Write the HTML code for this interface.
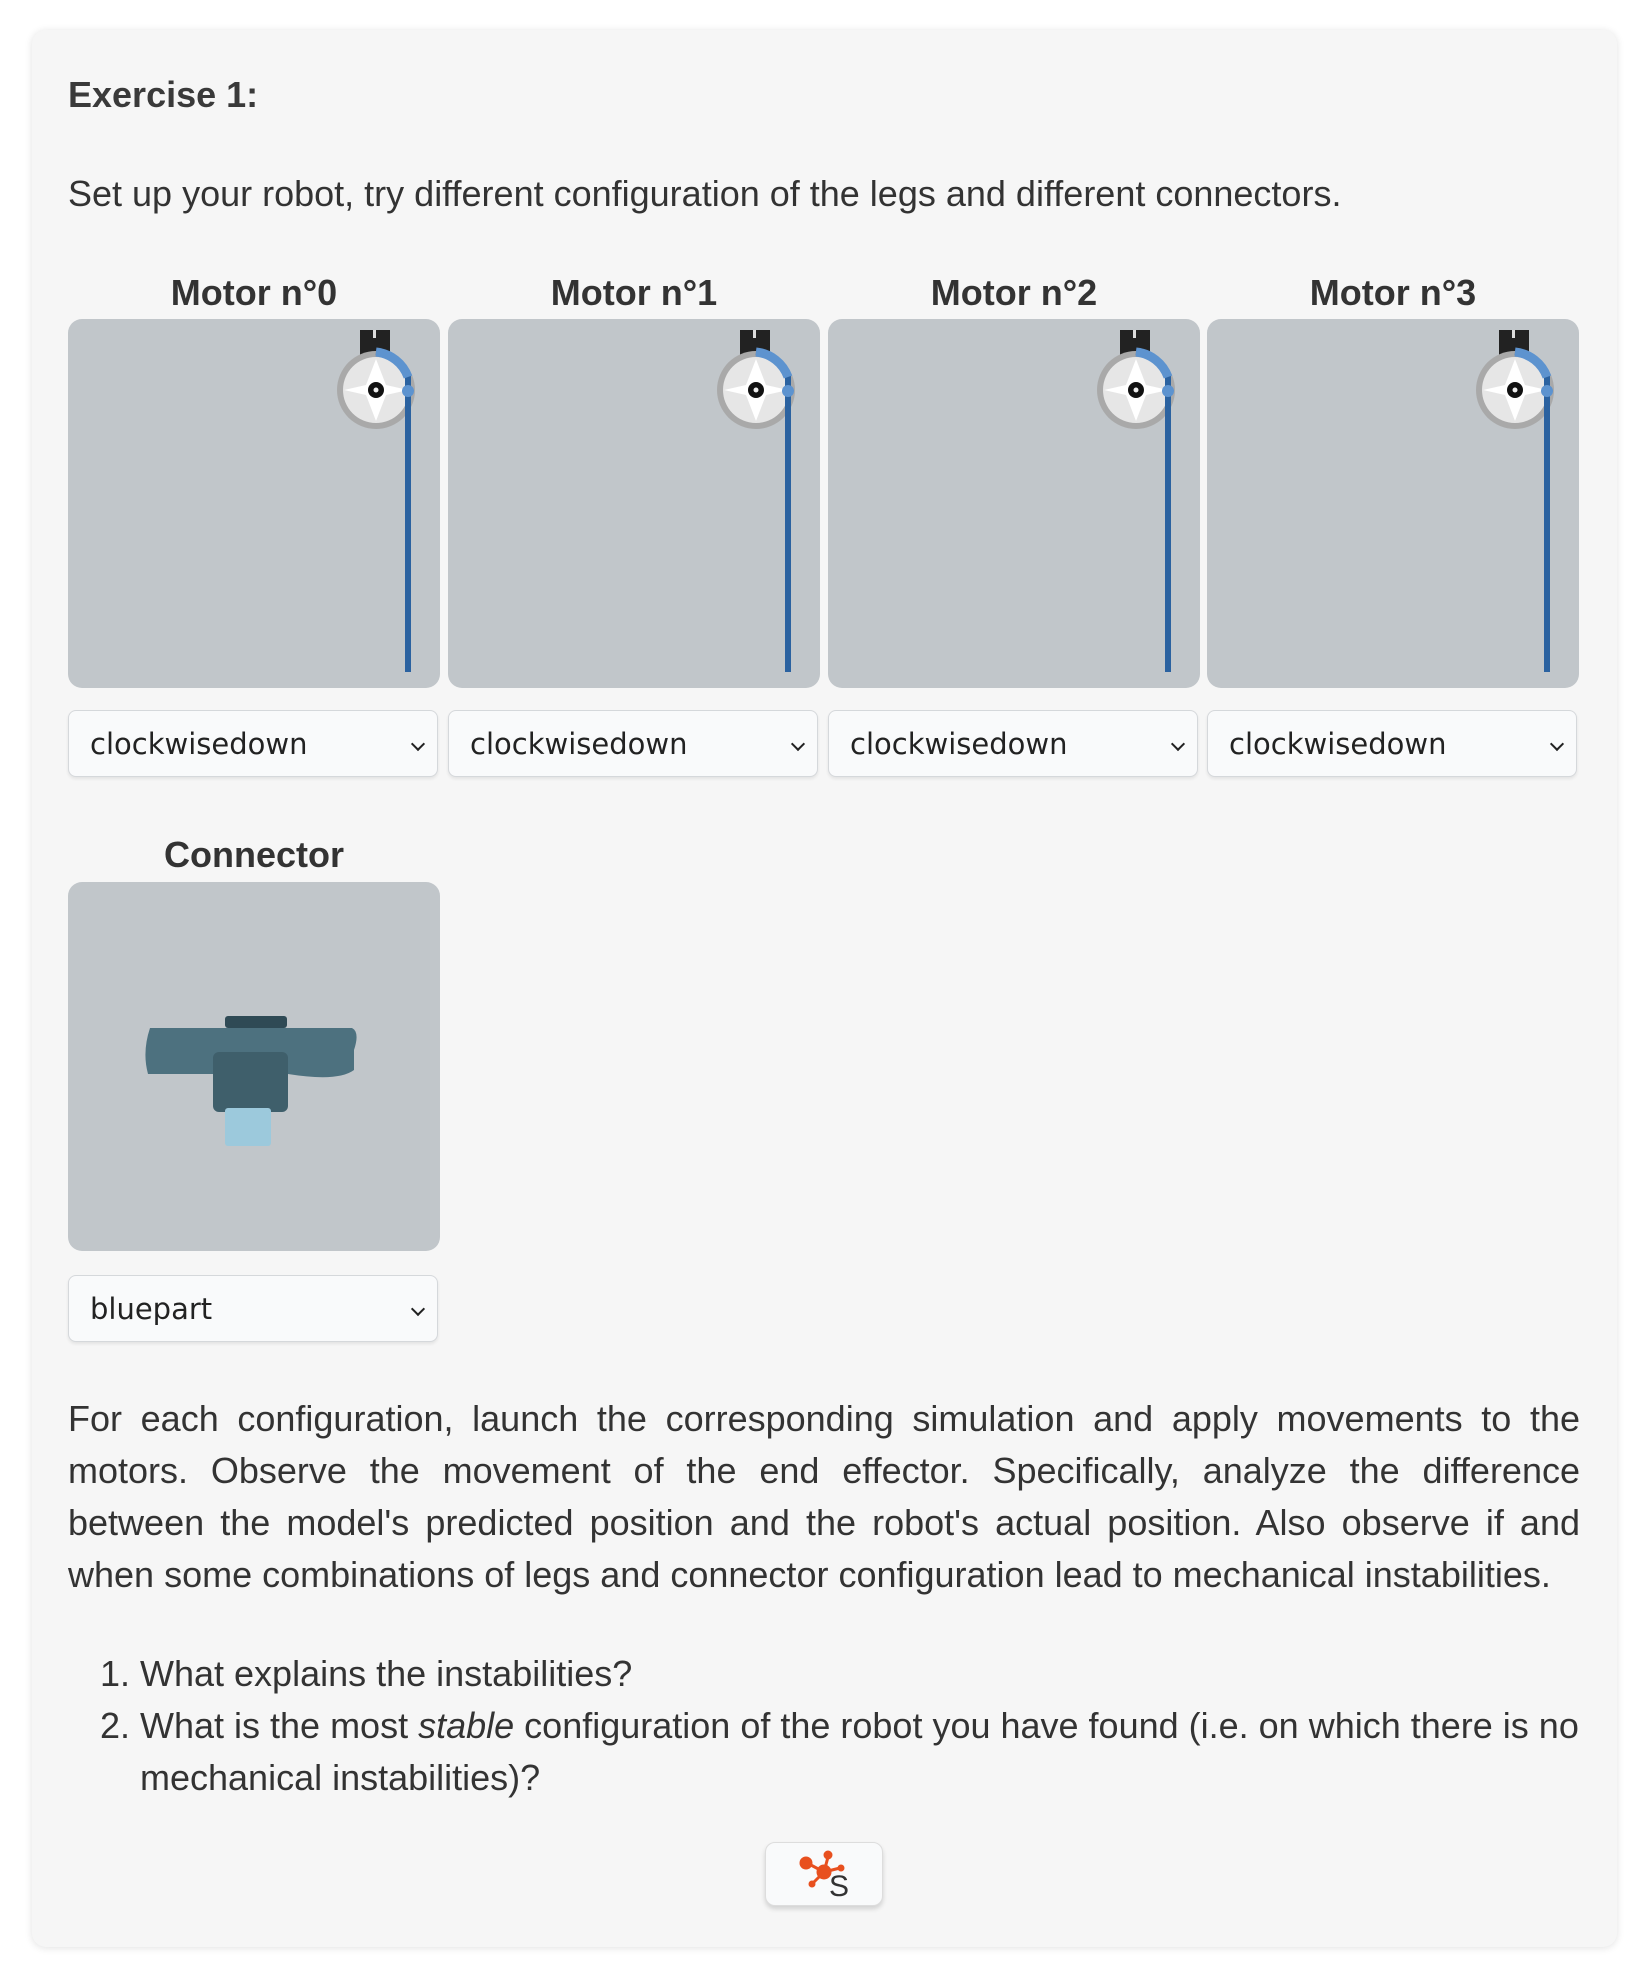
<!DOCTYPE html>
<html><head><meta charset="utf-8"><style>
body{margin:0;background:#fff;width:1647px;height:1987px;font-family:"Liberation Sans",sans-serif;color:#333;}
.card{position:absolute;left:32px;top:30px;width:1585px;height:1917px;background:#f6f6f6;border-radius:14px;box-shadow:0 1px 8px rgba(0,0,0,.12);}
.abs{position:absolute;}
h3{position:absolute;left:68px;top:74px;margin:0;font-size:36px;font-weight:bold;color:#3a3a3a;}
.t{position:absolute;font-size:36px;font-weight:bold;text-align:center;width:372px;color:#333;}
.p{position:absolute;left:68px;width:1512px;font-size:36px;line-height:52px;color:#333;}
.panel{position:absolute;width:372px;height:369px;background:#c1c6ca;border-radius:14px;overflow:hidden;}
.sel{position:absolute;width:370px;height:67px;background:#f9fafb;border:1px solid #d5d8db;border-radius:8px;box-shadow:0 2px 3px rgba(0,0,0,.08);line-height:67px;color:#222;box-sizing:border-box;padding-left:21px;font-family:"DejaVu Sans","Liberation Sans",sans-serif;font-size:29px;}
.sel:after{content:"";position:absolute;right:14px;top:28px;width:8px;height:8px;border-right:2px solid #222;border-bottom:2px solid #222;transform:rotate(45deg);}
</style></head><body>
<div class="card"></div>
<h3>Exercise 1:</h3>
<div class="p" style="top:168px">Set up your robot, try different configuration of the legs and different connectors.</div>

<div class="t" style="left:68px;top:272px">Motor n°0</div>
<div class="t" style="left:448px;top:272px">Motor n°1</div>
<div class="t" style="left:828px;top:272px">Motor n°2</div>
<div class="t" style="left:1207px;top:272px">Motor n°3</div>

<svg width="0" height="0" style="position:absolute"><defs>
<g id="m">
<rect x="292" y="11" width="30" height="28" fill="#222"/>
<rect x="305" y="11" width="3" height="8" fill="#ddd"/>
<circle cx="308" cy="71" r="39" fill="#a9a9a9"/>
<circle cx="308" cy="71" r="33" fill="#e6e6e6"/>
<path d="M308 40 L318 66 L340 71 L318 76 L308 102 L298 76 L276 71 L298 66Z" fill="#fff"/>
<path d="M308 33 A38 38 0 0 1 340 58 L340 353" stroke="#2b62a0" stroke-width="6" fill="none"/>
<path d="M308 33 A38 38 0 0 1 340 58" stroke="#5d93cf" stroke-width="9" fill="none"/>
<circle cx="340" cy="72" r="6" fill="#5d93cf"/>
<circle cx="308" cy="71" r="8" fill="#111"/><circle cx="308" cy="71" r="2.5" fill="#eee"/>
</g></defs></svg>
<div class="panel" style="left:68px;top:319px"><svg width="372" height="369"><use href="#m"/></svg></div>
<div class="panel" style="left:448px;top:319px"><svg width="372" height="369"><use href="#m"/></svg></div>
<div class="panel" style="left:828px;top:319px"><svg width="372" height="369"><use href="#m"/></svg></div>
<div class="panel" style="left:1207px;top:319px"><svg width="372" height="369"><use href="#m"/></svg></div>

<div class="sel" style="left:68px;top:710px">clockwisedown</div>
<div class="sel" style="left:448px;top:710px">clockwisedown</div>
<div class="sel" style="left:828px;top:710px">clockwisedown</div>
<div class="sel" style="left:1207px;top:710px">clockwisedown</div>

<div class="t" style="left:68px;top:834px">Connector</div>
<div class="panel" style="left:68px;top:882px"><svg width="372" height="372">
<rect x="157" y="134" width="62" height="12" rx="3" fill="#2f4a55"/>
<path d="M82 146 L284 146 Q292 150 286 168 L286 188 Q270 200 220 192 L80 192 Q74 170 82 146Z" fill="#4d717f"/>
<rect x="145" y="170" width="75" height="60" rx="6" fill="#3f5f6b"/>
<rect x="157" y="226" width="46" height="38" rx="3" fill="#9cc9dc"/>
</svg></div>
<div class="sel" style="left:68px;top:1275px">bluepart</div>

<div class="p" style="top:1393px;text-align:justify">For each configuration, launch the corresponding simulation and apply movements to the motors. Observe the movement of the end effector. Specifically, analyze the difference between the model's predicted position and the robot's actual position. Also observe if and when some combinations of legs and connector configuration lead to mechanical instabilities.</div>
<div class="abs" style="left:100px;top:1648px;font-size:36px;line-height:52px">1.</div>
<div class="abs" style="left:140px;top:1648px;font-size:36px;line-height:52px">What explains the instabilities?</div>
<div class="abs" style="left:100px;top:1700px;font-size:36px;line-height:52px">2.</div>
<div class="abs" style="left:140px;top:1700px;width:1440px;font-size:36px;line-height:52px">What is the most <i>stable</i> configuration of the robot you have found (i.e. on which there is no mechanical instabilities)?</div>

<div class="abs" style="left:765px;top:1842px;width:116px;height:62px;background:#f9fafb;border:1px solid #ddd;border-radius:10px;box-shadow:0 3px 5px rgba(0,0,0,.15)">
<svg width="116" height="62"><g fill="#e8501f" stroke="#e8501f" stroke-width="3">
<line x1="58" y1="29" x2="43" y2="21"/><line x1="58" y1="29" x2="62" y2="14"/><line x1="58" y1="29" x2="74" y2="25"/><line x1="58" y1="29" x2="48" y2="39"/>
<circle cx="58" cy="29" r="6"/><circle cx="40" cy="20" r="5"/><circle cx="62" cy="12" r="3"/><circle cx="75" cy="25" r="2"/><circle cx="46" cy="41" r="2"/></g>
<text x="63" y="53" font-family="Liberation Sans" font-size="30" fill="#333">S</text></svg></div>
</body></html>
